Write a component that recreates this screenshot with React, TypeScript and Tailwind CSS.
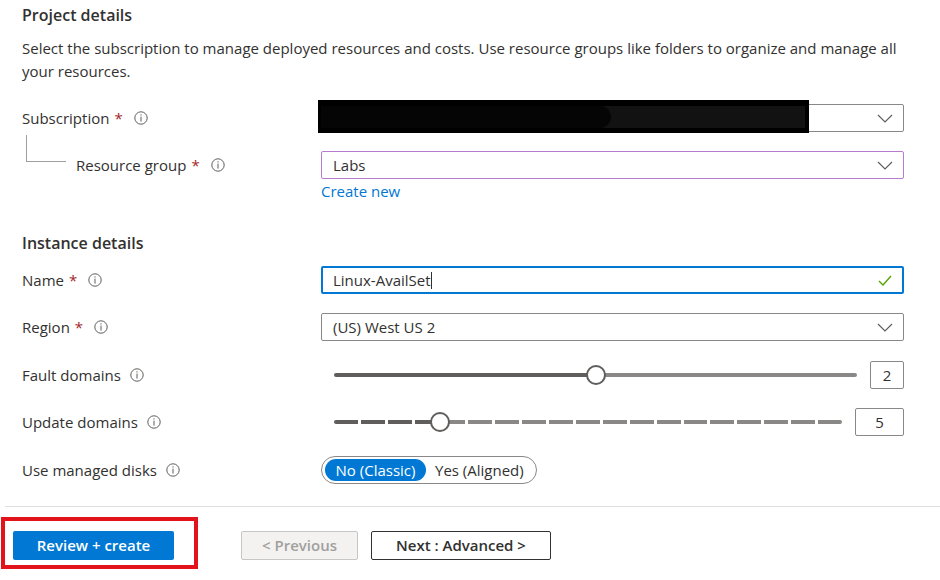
import React from "react";

const font = { fontFamily: '"Open Sans", "Noto Sans", "Liberation Sans", sans-serif' };

function Info() {
  return (
    <svg width="14" height="14" viewBox="0 0 14 14" className="shrink-0">
      <circle cx="7" cy="7" r="6.2" fill="none" stroke="#605e5c" strokeWidth="1" />
      <rect x="6.5" y="3.3" width="1" height="1.2" fill="#605e5c" />
      <rect x="6.5" y="5.6" width="1" height="5" fill="#605e5c" />
    </svg>
  );
}

function Chevron() {
  return (
    <svg width="16" height="9" viewBox="0 0 16 9" className="shrink-0">
      <path d="M1 1 L8 8 L15 1" fill="none" stroke="#605e5c" strokeWidth="1.2" />
    </svg>
  );
}

function Check() {
  return (
    <svg width="14" height="11" viewBox="0 0 14 11" className="shrink-0">
      <path d="M1 6 L5 10 L13 1" fill="none" stroke="#57a300" strokeWidth="1.4" />
    </svg>
  );
}

function Label({ text, required }: { text: string; required?: boolean }) {
  return (
    <div className="flex items-center">
      <span>{text}</span>
      {required && <span className="ml-[5px] text-[#a4262c]">*</span>}
      <span className={required ? "ml-[11px]" : "ml-[9px]"}>
        <Info />
      </span>
    </div>
  );
}

function Thumb() {
  return <div className="w-[20px] h-[20px] rounded-full bg-white border-2 border-[#605e5c] shrink-0 -mx-[10px] relative z-10" />;
}

function FaultSlider() {
  return (
    <div className="flex-1 flex items-center h-[28px]">
      <div className="flex-1 h-[4px] rounded-full bg-[#605e5c]" />
      <Thumb />
      <div className="flex-1 h-[4px] rounded-full bg-[#8a8886]" />
    </div>
  );
}

function UpdateSlider() {
  const segs = Array.from({ length: 19 }, (_, i) => i);
  return (
    <div className="flex-1 flex items-center h-[28px] relative">
      <div className="flex-1 flex gap-[3px] items-center">
        {segs.map((i) => (
          <div
            key={i}
            className={
              "flex-1 h-[4px] " +
              (i < 4 ? "bg-[#605e5c]" : "bg-[#8a8886]") +
              (i === 0 ? " rounded-l-full" : "") +
              (i === 18 ? " rounded-r-full" : "")
            }
          />
        ))}
      </div>
      <div className="absolute left-[96px] top-[4px] w-[20px] h-[20px] rounded-full bg-white border-2 border-[#605e5c]" />
    </div>
  );
}

export default function App() {
  return (
    <div className="w-[940px] h-[580px] bg-white overflow-hidden text-[#323130] text-[15px]" style={font}>
      <div className="pl-[22px] pr-[36px]">
        <h2 className="pt-[4px] text-[16px] leading-[22px] font-semibold">Project details</h2>
        <p className="mt-[11px] leading-[23px]">
          Select the subscription to manage deployed resources and costs. Use resource groups like folders to organize and manage all your resources.
        </p>

        {/* Subscription */}
        <div className="mt-[21px] flex items-center h-[28px]">
          <div className="w-[299px]">
            <Label text="Subscription" required />
          </div>
          <div className="flex-1 h-[28px] relative border border-[#8a8886] rounded-[2px] flex items-center justify-end pr-[10px]">
            <Chevron />
            <div className="absolute left-[-4px] top-[-5px] w-[491px] h-[33px] bg-black flex items-center pl-[3px]">
              <div className="w-[484px] h-[22px] bg-[#121212] relative">
                <div className="absolute left-0 top-0 w-[290px] h-[22px] rounded-r-full bg-[#050505]" />
              </div>
            </div>
          </div>
        </div>

        {/* Resource group */}
        <div className="mt-[19px] flex items-center h-[28px]">
          <div className="w-[299px] flex items-center">
            <div className="self-start -mt-[19px] ml-[4px] w-[40px] h-[27px] border-l border-b border-[#a19f9d]" />
            <div className="ml-[10px]">
              <Label text="Resource group" required />
            </div>
          </div>
          <div className="flex-1 h-[28px] border border-[#b57ccf] rounded-[2px] flex items-center justify-between pl-[11px] pr-[10px]">
            <span>Labs</span>
            <Chevron />
          </div>
        </div>
        <div className="mt-[2px] ml-[299px] leading-[20px] text-[#0078d4]">Create new</div>

        <h2 className="mt-[31px] text-[16px] leading-[22px] font-semibold">Instance details</h2>

        {/* Name */}
        <div className="mt-[12px] flex items-center h-[28px]">
          <div className="w-[299px]">
            <Label text="Name" required />
          </div>
          <div className="flex-1 h-[28px] border-2 border-[#0078d4] rounded-[2px] flex items-center justify-between pl-[10px] pr-[10px]">
            <span className="flex items-center">
              Linux-AvailSet<span className="inline-block w-px h-[17px] bg-[#323130]" />
            </span>
            <Check />
          </div>
        </div>

        {/* Region */}
        <div className="mt-[19px] flex items-center h-[28px]">
          <div className="w-[299px]">
            <Label text="Region" required />
          </div>
          <div className="flex-1 h-[28px] border border-[#8a8886] rounded-[2px] flex items-center justify-between pl-[11px] pr-[10px]">
            <span>(US) West US 2</span>
            <Chevron />
          </div>
        </div>

        {/* Fault domains */}
        <div className="mt-[20px] flex items-center h-[28px]">
          <div className="w-[299px]">
            <Label text="Fault domains" />
          </div>
          <div className="flex-1 flex items-center pl-[13px] gap-[13px]">
            <FaultSlider />
            <div className="w-[34px] h-[28px] border border-[#8a8886] rounded-[2px] flex items-center justify-center">2</div>
          </div>
        </div>

        {/* Update domains */}
        <div className="mt-[19px] flex items-center h-[28px]">
          <div className="w-[299px]">
            <Label text="Update domains" />
          </div>
          <div className="flex-1 flex items-center pl-[13px] gap-[13px]">
            <UpdateSlider />
            <div className="w-[49px] h-[28px] border border-[#8a8886] rounded-[2px] flex items-center justify-center">5</div>
          </div>
        </div>

        {/* Managed disks */}
        <div className="mt-[20px] flex items-center h-[28px]">
          <div className="w-[299px]">
            <Label text="Use managed disks" />
          </div>
          <div className="w-[216px] h-[28px] border border-[#8a8886] rounded-full flex items-center pl-[3px]">
            <div className="w-[101px] h-[22px] rounded-full bg-[#0078d4] text-white flex items-center justify-center">No (Classic)</div>
            <div className="ml-[9px]">Yes (Aligned)</div>
          </div>
        </div>
      </div>

      <div className="mt-[22px] ml-[5px] h-px bg-[#e1dfdd]" />

      <div className="mt-[10px] ml-[1px] flex items-start">
        <div className="w-[197px] h-[52px] border-4 border-[#e3131b] pl-[8px] pt-[10px]">
          <div className="w-[161px] h-[29px] bg-[#0078d4] rounded-[2px] text-white font-semibold flex items-center justify-center">
            Review + create
          </div>
        </div>
        <div className="ml-[43px] mt-[14px] w-[117px] h-[29px] bg-[#f3f2f1] border border-[#c8c6c4] rounded-[2px] text-[#a19f9d] font-semibold flex items-center justify-center">
          &lt; Previous
        </div>
        <div className="ml-[13px] mt-[14px] w-[180px] h-[29px] bg-white border border-[#323130] rounded-[2px] font-semibold flex items-center justify-center">
          Next : Advanced &gt;
        </div>
      </div>
    </div>
  );
}
